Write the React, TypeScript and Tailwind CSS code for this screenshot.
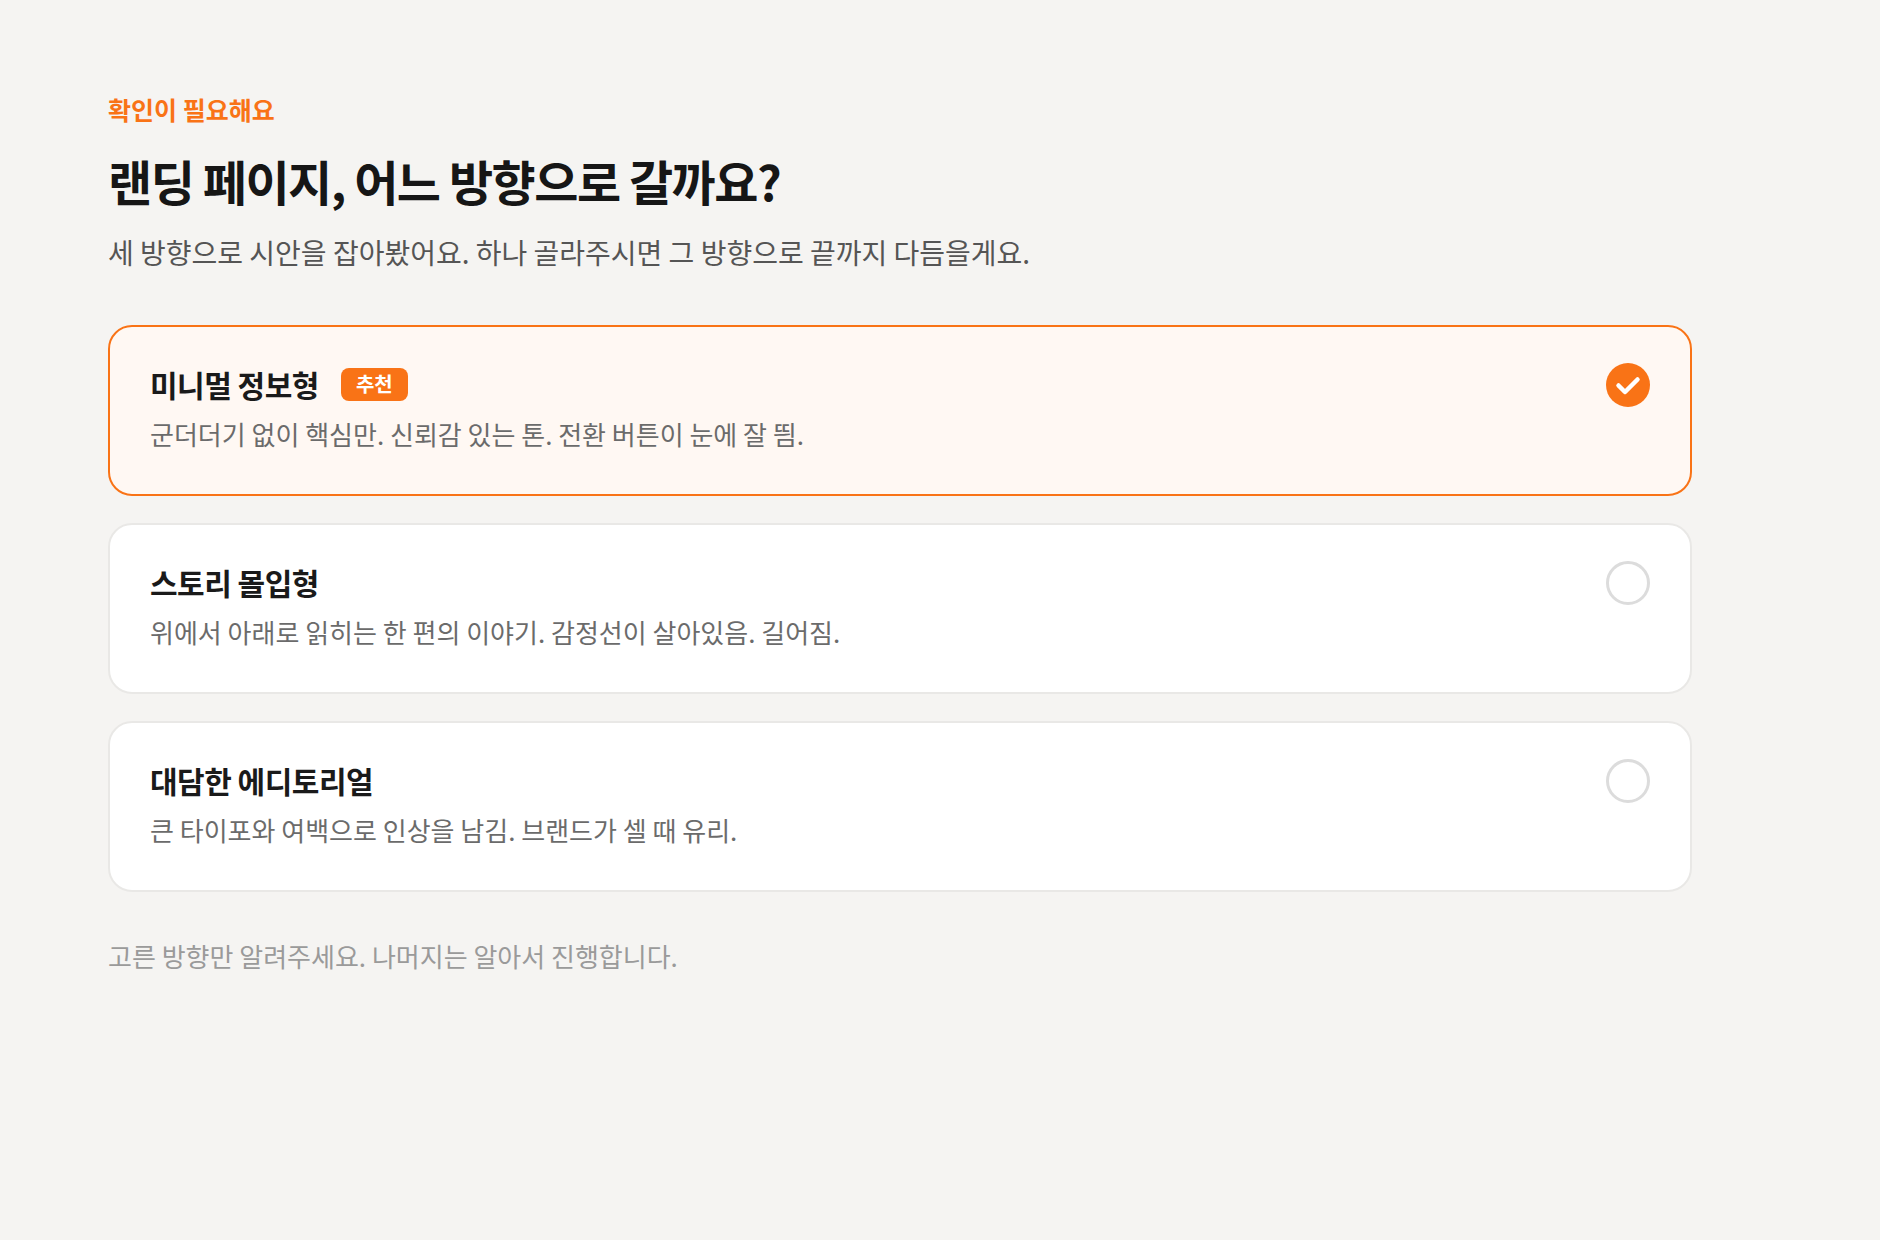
import React from "react";

const F = { fontFamily: '"Noto Sans CJK KR", "Noto Sans", sans-serif' };

function Card({ title, desc, selected, badge }: { title: string; desc: string; selected?: boolean; badge?: boolean }) {
  return (
    <div
      className={
        "flex items-start justify-between rounded-[24px] border-2 pl-[40px] pr-[40px] pt-[39px] pb-[44px] " +
        (selected ? "border-[#f97316] bg-[#fff8f3]" : "border-[#e9e8e6] bg-white")
      }
    >
      <div className="flex flex-col gap-[16px]">
        <div className="flex items-center gap-[22px]">
          <span className="text-[30px] leading-[36px] font-bold tracking-[-0.5px] text-[#1a1a1a]">{title}</span>
          {badge && (
            <span className="rounded-[8px] bg-[#f97316] px-[15px] h-[33px] flex items-center text-[20px] font-bold text-white">추천</span>
          )}
        </div>
        <div className="text-[26px] leading-[32px] text-[#6b6b6b]">{desc}</div>
      </div>
      <div className="-mt-[3px]">
        {selected ? (
          <svg width="44" height="44" viewBox="0 0 44 44">
            <circle cx="22" cy="22" r="22" fill="#f97316" />
            <path d="M12.5 22.5 L19 29 L31.5 16.5" stroke="white" strokeWidth="4.5" fill="none" strokeLinecap="round" strokeLinejoin="round" />
          </svg>
        ) : (
          <svg width="44" height="44" viewBox="0 0 44 44">
            <circle cx="22" cy="22" r="20.5" fill="white" stroke="#dcdcdc" strokeWidth="3" />
          </svg>
        )}
      </div>
    </div>
  );
}

export default function App() {
  return (
    <div style={F} className="min-h-[1240px] w-full bg-[#f5f4f2]">
      <div className="pl-[108px] pt-[94px] w-[1692px]">
        <div className="text-[25px] leading-[30px] font-bold text-[#f97316]">확인이 필요해요</div>
        <h1 className="mt-[28px] text-[48px] leading-[56px] font-bold tracking-[-1.5px] text-[#161616]">랜딩 페이지, 어느 방향으로 갈까요?</h1>
        <p className="mt-[27px] text-[28px] leading-[34px] text-[#555555]">세 방향으로 시안을 잡아봤어요. 하나 골라주시면 그 방향으로 끝까지 다듬을게요.</p>
        <div className="mt-[56px] flex flex-col gap-[27px]">
          <Card selected badge title="미니멀 정보형" desc="군더더기 없이 핵심만. 신뢰감 있는 톤. 전환 버튼이 눈에 잘 띔." />
          <Card title="스토리 몰입형" desc="위에서 아래로 읽히는 한 편의 이야기. 감정선이 살아있음. 길어짐." />
          <Card title="대담한 에디토리얼" desc="큰 타이포와 여백으로 인상을 남김. 브랜드가 셀 때 유리." />
        </div>
        <p className="mt-[48px] text-[26px] leading-[32px] text-[#9a9a9a]">고른 방향만 알려주세요. 나머지는 알아서 진행합니다.</p>
      </div>
    </div>
  );
}
